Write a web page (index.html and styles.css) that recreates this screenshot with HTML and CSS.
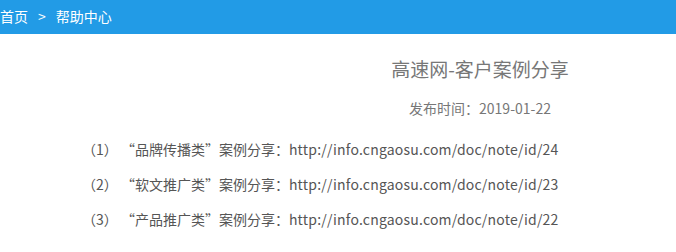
FILE: index.html
```html
<!doctype html>
<html lang="zh-CN">
    <head>
        <meta charset="UTF-8"/>
        <title>帮助中心</title>
        <link rel="stylesheet" href="styles.css">
    </head>
    <body>
    <div class="crumb">
        <a href="#">首页</a><span class="sep">&gt;</span><a href="#">帮助中心</a>
    </div>
    <div class="article">
        <div class="head">
            <h1 class="title">高速网-客户案例分享</h1>
            <p class="date">发布时间：2019-01-22</p>
        </div>
        <div class="content">
            <p>（1） <span class="q">“品牌传播类”</span>案例分享：<a class="link" href="http://info.cngaosu.com/doc/note/id/24">http://info.cngaosu.com/doc/note/id/24</a></p>
            <p>（2） <span class="q">“软文推广类”</span>案例分享：<a class="link" href="http://info.cngaosu.com/doc/note/id/23">http://info.cngaosu.com/doc/note/id/23</a></p>
            <p>（3） <span class="q">“产品推广类”</span>案例分享：<a class="link" href="http://info.cngaosu.com/doc/note/id/22">http://info.cngaosu.com/doc/note/id/22</a></p>
        </div>
    </div>
    </body>
</html>
```

FILE: styles.css
```css
* {
    margin: 0px;
    padding: 0px;
}
body {
    font-family: "Noto Sans CJK SC", "Noto Sans", sans-serif;
    font-size: 14px;
    color: #555;
}
.crumb {
    height: 34px;
    line-height: 32px;
    background: #229be6;
    color: #fff;
    font-size: 14px;
}
.crumb a {
    color: #fff;
    text-decoration: none;
}
.sep {
    margin: 0 10px;
}
.head {
    padding-left: 284px;/*原页面是960宽居中*/
    text-align: center;
}
.title {
    font-size: 19px;
    font-weight: normal;
    color: #777;
    margin-top: 22px;
    line-height: 26px;
}
.date {
    color: #777;
    margin-top: 16px;
    line-height: 20px;
}
.content {
    padding: 14px 0 0 82px;
}
.content p {
    line-height: 35px;
}
.q {
    font-feature-settings: "fwid";/*引号用全角*/
}
.link {
    color: inherit;
    text-decoration: none;
    letter-spacing: 0.2px;
}
```
